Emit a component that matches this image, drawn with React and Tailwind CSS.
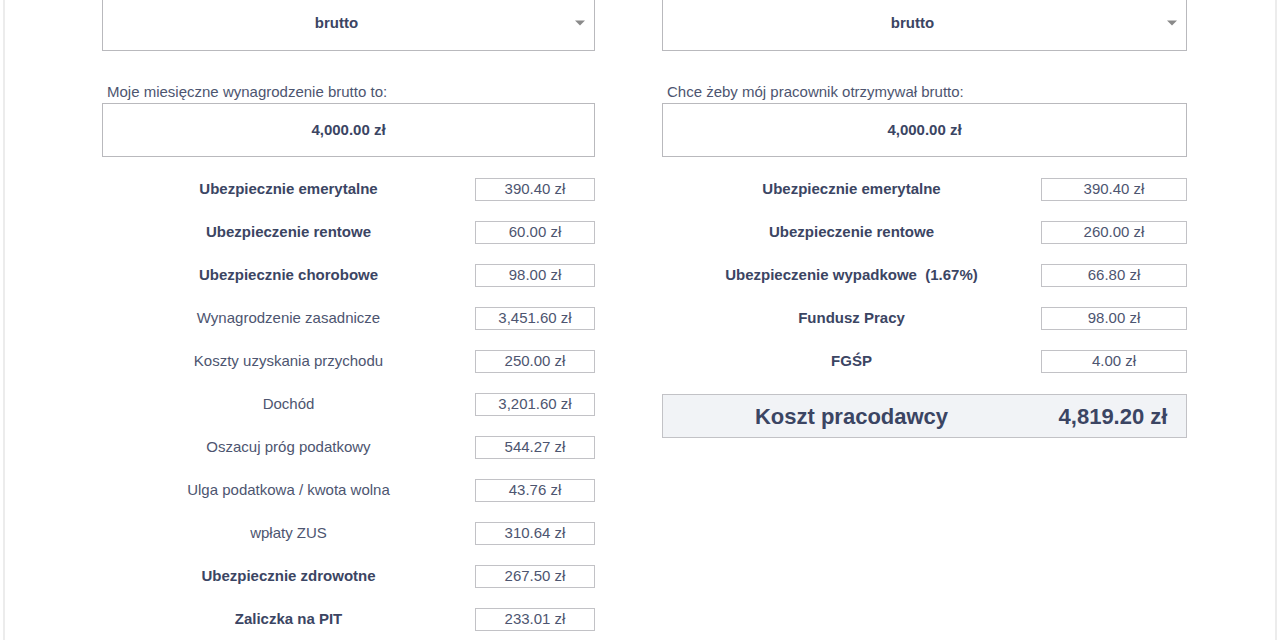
const leftRows = [
  { label: "Ubezpiecznie emerytalne", value: "390.40 zł", bold: true },
  { label: "Ubezpieczenie rentowe", value: "60.00 zł", bold: true },
  { label: "Ubezpiecznie chorobowe", value: "98.00 zł", bold: true },
  { label: "Wynagrodzenie zasadnicze", value: "3,451.60 zł" },
  { label: "Koszty uzyskania przychodu", value: "250.00 zł" },
  { label: "Dochód", value: "3,201.60 zł" },
  { label: "Oszacuj próg podatkowy", value: "544.27 zł" },
  { label: "Ulga podatkowa / kwota wolna", value: "43.76 zł" },
  { label: "wpłaty ZUS", value: "310.64 zł" },
  { label: "Ubezpiecznie zdrowotne", value: "267.50 zł", bold: true },
  { label: "Zaliczka na PIT", value: "233.01 zł", bold: true },
]

const rightRows = [
  { label: "Ubezpiecznie emerytalne", value: "390.40 zł", bold: true },
  { label: "Ubezpieczenie rentowe", value: "260.00 zł", bold: true },
  { label: "Ubezpieczenie wypadkowe\u00a0 (1.67%)", value: "66.80 zł", bold: true },
  { label: "Fundusz Pracy", value: "98.00 zł", bold: true },
  { label: "FGŚP", value: "4.00 zł", bold: true },
]

const SelectBox = () => (
  <div className="relative -mt-[6px] h-[57px] pt-[2px] pr-[24px] border border-[#b9b9bd] bg-white flex items-center justify-center">
    <span className="text-[15px] font-bold text-[#3b4563]">brutto</span>
    <span className="absolute right-[9px] top-1/2 -translate-y-1/2 w-0 h-0 border-l-[5px] border-r-[5px] border-t-[5px] border-l-transparent border-r-transparent border-t-[#8a8a8a]"></span>
  </div>
)

const Row = ({ row, boxWidth }) => (
  <div className="flex items-center h-[43px]">
    <div
      className={`flex-1 text-center text-[15px] whitespace-pre ${
        row.bold ? "font-bold text-[#3b4563]" : "text-[#4d5570]"
      }`}
    >
      {row.label}
    </div>
    <div
      className={`${boxWidth} h-[23px] border border-[#c2c2c6] bg-white flex items-center justify-center text-[15px] text-[#4d5570]`}
    >
      {row.value}
    </div>
  </div>
)

const Column = ({ label, rows, boxWidth, children }) => (
  <div className="flex flex-col">
    <SelectBox />
    <div className="mt-[33px] pl-[5px] text-[15px] leading-[16px] text-[#4d5570]">{label}</div>
    <div className="mt-[3px] h-[54px] border border-[#b9b9bd] bg-white flex items-center justify-center text-[15px] font-bold text-[#3b4563]">
      4,000.00 zł
    </div>
    <div className="mt-[11px] flex flex-col">
      {rows.map((row) => (
        <Row key={row.label} row={row} boxWidth={boxWidth} />
      ))}
    </div>
    {children}
  </div>
)

export default function App() {
  return (
    <div
      className="h-[640px] w-full overflow-hidden bg-white px-[3px]"
      style={{ fontFamily: '"Liberation Sans", Arial, sans-serif' }}
    >
      <div className="h-full border-x-2 border-[#ececec] flex pl-[97px] gap-[67px]">
        <div className="w-[493px]">
          <Column label="Moje miesięczne wynagrodzenie brutto to:" rows={leftRows} boxWidth="w-[120px]" />
        </div>
        <div className="w-[525px]">
          <Column label="Chce żeby mój pracownik otrzymywał brutto:" rows={rightRows} boxWidth="w-[146px]">
            <div className="mt-[11px] h-[44px] border border-[#c2c2c6] bg-[#f1f3f6] flex items-center">
              <div className="flex-1 text-center text-[22px] font-bold text-[#3b4563]">Koszt pracodawcy</div>
              <div className="w-[146px] text-center text-[22px] font-bold text-[#3b4563]">4,819.20 zł</div>
            </div>
          </Column>
        </div>
      </div>
    </div>
  )
}
